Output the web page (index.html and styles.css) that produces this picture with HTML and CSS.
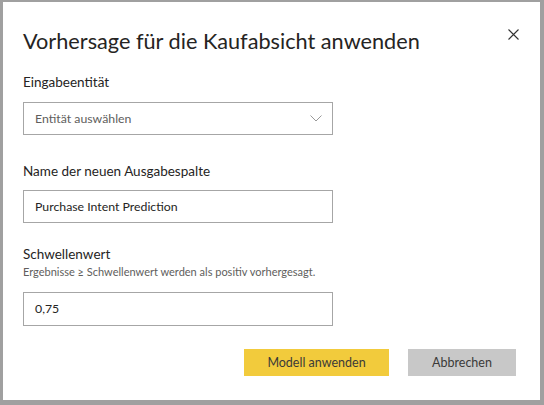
FILE: index.html
```html
<!DOCTYPE html>
<html lang="de">
<head>
<meta charset="utf-8">
<link rel="stylesheet" href="styles.css">
</head>
<body>
<div class="dialog">
  <div class="header">
    <h1 class="title">Vorhersage für die Kaufabsicht anwenden</h1>
    <button class="close" aria-label="Schließen">
      <svg width="11" height="11" viewBox="0 0 11 11"><path d="M0.5 0.5 L10.5 10.5 M10.5 0.5 L0.5 10.5" stroke="#333" stroke-width="1.1" fill="none"/></svg>
    </button>
  </div>
  <div class="field field-first">
    <div class="label">Eingabeentität</div>
    <div class="box select">
      <span class="placeholder">Entität auswählen</span>
      <svg class="chevron" width="12" height="7" viewBox="0 0 12 7"><path d="M0.5 0.5 L6 6 L11.5 0.5" stroke="#999" stroke-width="1" fill="none"/></svg>
    </div>
  </div>
  <div class="field field-second">
    <div class="label">Name der neuen Ausgabespalte</div>
    <div class="box box-second"><span class="value">Purchase Intent Prediction</span></div>
  </div>
  <div class="field field-third">
    <div class="label">Schwellenwert</div>
    <div class="hint">Ergebnisse ≥ Schwellenwert werden als positiv vorhergesagt.</div>
    <div class="box box-third"><span class="value">0,75</span></div>
  </div>
  <div class="actions">
    <button class="btn btn-primary">Modell anwenden</button>
    <button class="btn btn-secondary">Abbrechen</button>
  </div>
</div>
</body>
</html>
```
FILE: styles.css
```css
html, body {
  margin: 0;
  padding: 0;
}
body {
  width: 544px;
  height: 405px;
  background: #a0a0a0;
  font-family: Lato, "Open Sans", sans-serif;
  color: #252423;
}
.dialog {
  box-sizing: border-box;
  width: 544px;
  height: 405px;
  border: solid #a0a0a0;
  border-width: 2px 4px 5px 3px;
  background: #fff;
  padding: 0 0 0 20px;
}
.header {
  display: flex;
  justify-content: space-between;
  align-items: flex-start;
  padding-top: 25px;
}
.title {
  margin: 0;
  font-weight: 400;
  font-size: 21.7px;
  line-height: 28px;
  color: #252423;
}
.close {
  border: 0;
  background: none;
  padding: 0;
  margin: 2px 21px 0 0;
  width: 11px;
  height: 11px;
  display: block;
}
.close svg { display: block; }
.field { display: flex; flex-direction: column; }
.field-first { margin-top: 17px; }
.field-second { margin-top: 26px; }
.field-third { margin-top: 21px; }
.label {
  font-size: 13.5px;
  line-height: 20px;
  color: #252423;
}
.hint {
  font-size: 11px;
  line-height: 15px;
  color: #605e5c;
}
.box {
  box-sizing: border-box;
  width: 310px;
  height: 33px;
  border: 1px solid #a6a6a6;
  margin-top: 10px;
  display: flex;
  align-items: center;
  padding: 0 10px 1px 11px;
  font-size: 12.3px;
}
.box-second { margin-top: 9px; }
.box-third { margin-top: 13px; height: 34px; }
.select { justify-content: space-between; padding-right: 10px; }
.placeholder { color: #605e5c; }
.value { color: #252423; }
.chevron { display: block; }
.actions {
  display: flex;
  justify-content: flex-end;
  gap: 19px;
  margin-top: 23px;
  padding-right: 24px;
}
.btn {
  border: 0;
  height: 27px;
  font-family: inherit;
  font-size: 12.5px;
  color: #3b3a39;
  padding: 0;
}
.btn-primary { background: #f2cb3c; width: 145px; }
.btn-secondary { background: #c8c8c8; width: 108px; }
```
